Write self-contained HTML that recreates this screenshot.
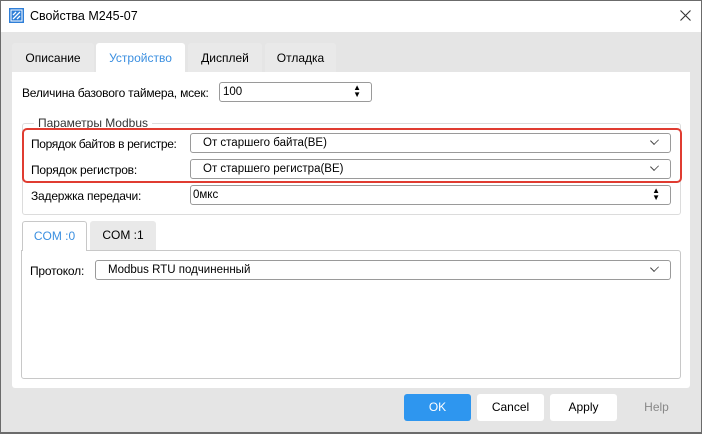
<!DOCTYPE html><html><head><meta charset="utf-8"><style>
*{box-sizing:border-box;margin:0;padding:0}
body{width:702px;height:434px;overflow:hidden;font-family:"Liberation Sans",sans-serif;font-size:12px;color:#000;background:#e5e5e5;position:relative}
.a{position:absolute}
.win{left:0;top:0;width:702px;height:434px;border:1px solid #6b6b6b;border-bottom:2px solid #6b6b6b}
.title{left:1px;top:1px;width:700px;height:31px;background:#fff}
.tab{position:absolute;top:43px;height:30px;background:#e9e9e9;border-radius:3px 3px 0 0;text-align:center;line-height:31px;font-size:12px}
.panel{left:12px;top:72px;width:678px;height:316px;background:#fff;border-radius:0 0 3px 3px}
.box{position:absolute;border:1px solid #9a9a9a;border-radius:3px;background:#fff;height:20px;line-height:18px;padding-left:12px;font-size:11.5px}
.lbl{position:absolute;font-size:12px;letter-spacing:-0.2px}
.chev{position:absolute;right:12px;top:3px;width:7px;height:7px;border-right:1px solid #444;border-bottom:1px solid #444;transform:rotate(45deg) scaleX(.8)}
.spin{position:absolute;right:10px;font-size:8px;line-height:7px;top:1px}
.btn{position:absolute;top:394px;width:67px;height:27px;border-radius:3px;background:#fff;text-align:center;line-height:27px;font-size:12px}
</style></head><body>
<div class="a win"></div>
<div class="a title"></div>
<svg class="a" style="left:9px;top:8px" width="15" height="15" viewBox="0 0 15 15"><rect x="0" y="0" width="15" height="15" fill="#2f7fd8"/><rect x="2" y="2" width="11" height="11" fill="none" stroke="#fff" stroke-width="1"/><path d="M4 11 L11 4 M4 7 L7 4 M8 11 L11 8" stroke="#fff" stroke-width="1.3"/></svg>
<div class="a" style="left:30px;top:9px;font-size:12.5px">Свойства M245-07</div>
<svg class="a" style="left:680px;top:10px" width="11" height="11"><path d="M0.5 0.5 L10.5 10.5 M10.5 0.5 L0.5 10.5" stroke="#333" stroke-width="1.1"/></svg>
<div class="tab" style="left:12px;width:82px">Описание</div>
<div class="tab" style="left:96px;width:89px;background:#fff;color:#3b8fe0">Устройство</div>
<div class="tab" style="left:188px;width:74px">Дисплей</div>
<div class="tab" style="left:265px;width:71px">Отладка</div>
<div class="a panel"></div>
<div class="lbl" style="left:22px;top:86px">Величина базового таймера, мсек:</div>
<div class="box" style="left:219px;top:82px;width:153px;padding-left:3px">100<span class="spin">▲<br>▼</span></div>
<div class="a" style="left:22px;top:123px;width:659px;height:92px;border:1px solid #dcdcdc;border-radius:3px"></div>
<div class="a" style="left:34px;top:116px;background:#fff;padding:0 4px;font-size:12px;color:#333">Параметры Modbus</div>
<div class="a" style="left:22px;top:128px;width:660px;height:55px;border:2.5px solid #e03c31;border-radius:5px"></div>
<div class="lbl" style="left:31px;top:137px;letter-spacing:-0.35px">Порядок байтов в регистре:</div>
<div class="box" style="left:190px;top:133px;width:481px">От старшего байта(BE)<span class="chev"></span></div>
<div class="lbl" style="left:31px;top:163px">Порядок регистров:</div>
<div class="box" style="left:190px;top:159px;width:481px">От старшего регистра(BE)<span class="chev"></span></div>
<div class="lbl" style="left:31px;top:189px">Задержка передачи:</div>
<div class="box" style="left:190px;top:185px;width:481px;padding-left:2px">0мкс<span class="spin">▲<br>▼</span></div>
<div class="a" style="left:21px;top:250px;width:660px;height:129px;border:1px solid #c8c8c8;border-radius:0 3px 3px 3px"></div>
<div class="a" style="left:22px;top:221px;width:65px;height:30px;background:#fff;border:1px solid #c8c8c8;border-bottom:none;border-radius:3px 3px 0 0;color:#3b8fe0;text-align:center;line-height:28px">COM :0</div>
<div class="a" style="left:90px;top:221px;width:66px;height:29px;background:#e9e9e9;border-radius:3px 3px 0 0;text-align:center;line-height:28px">COM :1</div>
<div class="lbl" style="left:30px;top:264px">Протокол:</div>
<div class="box" style="left:95px;top:260px;width:576px">Modbus RTU подчиненный<span class="chev"></span></div>
<div class="btn" style="left:404px;background:#2e96ef;color:#fff">OK</div>
<div class="btn" style="left:477px">Cancel</div>
<div class="btn" style="left:550px">Apply</div>
<div class="btn" style="left:623px;background:none;color:#888">Help</div>
</body></html>
